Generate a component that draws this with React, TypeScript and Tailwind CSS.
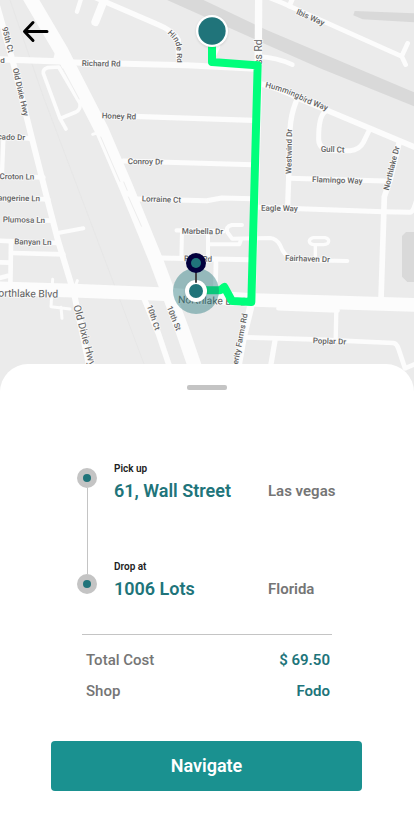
import React from "react";

type Road = { d: string; w: number };

const roads: Road[] = [
  // main avenues
  { d: "M88 -10 L185 155 L228 240 L305 390 L378 560 L470 785 L545 985 L588 1110", w: 42 },
  { d: "M-10 865 L220 872 L480 882 L760 900 L1000 907 L1250 915", w: 41 },
  { d: "M-8 20 L40 190 L92 400 L140 590 L175 725 L222 880 L270 1110", w: 18 },
  { d: "M776 -10 L774 300 L756 905 L730 1010 L712 1110", w: 22 },
  { d: "M430 890 L475 1000 L512 1110", w: 17 },
  // streets west of the highway
  { d: "M-5 178 L180 184", w: 19 },
  { d: "M172 182 Q168 165 180 160", w: 20 },
  { d: "M60 413 L95 416", w: 14 },
  { d: "M10 420 L6 520", w: 13 },
  { d: "M90 531 L130 532", w: 14 },
  { d: "M110 597 L145 598", w: 14 },
  { d: "M120 661 L160 662", w: 14 },
  { d: "M178 698 L250 685", w: 12 },
  { d: "M-5 722 L45 724 M150 728 L175 729", w: 14 },
  { d: "M33 730 L31 860", w: 14 },
  { d: "M38 759 L190 763", w: 14 },
  { d: "M-5 787 L32 788", w: 14 },
  { d: "M-5 835 L22 828", w: 14 },
  { d: "M158 838 L153 920 L210 927 M183 922 L186 955 M220 875 L232 842", w: 9 },
  // loop beside the highway
  { d: "M198 387 L180 355 L130 220 Q128 208 142 203 L176 201 L240 310 Q243 328 228 336 L184 354", w: 11 },
  { d: "M278 403 L300 396", w: 9 },
  // north side
  { d: "M245 -25 L470 72 Q520 92 535 120 L536 190", w: 16 },
  { d: "M245 -10 L231 35", w: 13 },
  { d: "M312 0 L286 66", w: 24 },
  { d: "M190 187 L560 196 L770 206", w: 18 },
  { d: "M636 180 L655 140", w: 12 },
  { d: "M400 349 L760 361", w: 16 },
  { d: "M370 483 L760 494", w: 15 },
  { d: "M410 597 L620 602 L665 594 L760 596", w: 15 },
  // centre block
  { d: "M530 691 L670 694", w: 13 },
  { d: "M726 675 L695 675 Q675 680 683 698 L696 716 L810 714 Q830 716 840 735 Q855 775 885 780 L1042 783", w: 12 },
  { d: "M546 695 L544 775 M624 695 L624 775 M624 733 L718 733 L722 722", w: 12 },
  { d: "M480 774 L752 779", w: 15 },
  { d: "M648 780 L646 890", w: 14 },
  // east side
  { d: "M775 -20 L850 10 L1205 169 L1223 130 M1205 169 L1217 194", w: 14 },
  { d: "M880 -10 L868 18", w: 15 },
  { d: "M775 170 Q830 172 877 194", w: 14 },
  { d: "M775 250 Q840 265 900 297 L1110 385 L1250 444", w: 17 },
  { d: "M888 305 Q872 345 870 390 L866 535 L863 620", w: 16 },
  { d: "M975 335 Q955 350 956 420 Q958 451 1000 452 L1050 452 Q1078 450 1090 427 L1108 390", w: 15 },
  { d: "M1198 425 L1170 540 L1153 590 L1143 900", w: 17 },
  { d: "M868 535 L1155 543", w: 15 },
  { d: "M775 622 L1150 635 L1230 637 Q1240 636 1250 600", w: 15 },
  { d: "M940 713 L975 713 Q986 715 986 723 Q986 733 970 734 L942 734 Q928 732 928 723 Q929 715 940 713 M946 736 L946 770", w: 10 },
  { d: "M835 925 L1013 932", w: 13 },
  { d: "M1009 930 L1007 1020", w: 13 },
  { d: "M738 1012 L940 1018 L1180 1029 Q1190 1030 1195 1045 L1215 1105 L1250 1090", w: 14 },
  { d: "M825 1022 L810 1110", w: 16 },
];

type Label = { t: string; x: number; y: number; r?: number; big?: boolean; end?: boolean };

const labels: Label[] = [
  { t: "95th Ct", x: 6, y: 83, r: 76 },
  { t: "d", x: 1, y: 188 },
  { t: "Old Dixie Hwy", x: 38, y: 206, r: 77 },
  { t: "Richard Rd", x: 245, y: 198, r: 1 },
  { t: "Honey Rd", x: 305, y: 355, r: 2 },
  { t: "Conroy Dr", x: 383, y: 492, r: 1 },
  { t: "Lorraine Ct", x: 425, y: 604, r: 2 },
  { t: "Marbella Dr", x: 545, y: 701, r: 1 },
  { t: "Ruth Rd", x: 552, y: 784, r: 1 },
  { t: "cado Dr", x: 75, y: 421, r: 2, end: true },
  { t: "Croton Ln", x: 103, y: 539, r: 1, end: true },
  { t: "angerine Ln", x: 120, y: 604, r: 1, end: true },
  { t: "Plumosa Ln", x: 135, y: 669, r: 1, end: true },
  { t: "Banyan Ln", x: 154, y: 735, r: 1, end: true },
  { t: "orthlake Blvd", x: 174, y: 893, r: 1, big: true, end: true },
  { t: "Old Dixie Hwy", x: 220, y: 918, r: 75, big: true },
  { t: "10th Ct", x: 440, y: 918, r: 71 },
  { t: "10th St", x: 500, y: 922, r: 68 },
  { t: "Northlake Blvd", x: 534, y: 909, r: 2, big: true },
  { t: "ss Rd", x: 785, y: 118, r: -90, big: true, end: true },
  { t: "Prosperity Farms Rd", x: 743, y: 942, r: -79, end: true },
  { t: "Ibis Way", x: 887, y: 41, r: 24 },
  { t: "Westwind Dr", x: 874, y: 522, r: -89 },
  { t: "Gull Ct", x: 962, y: 455, r: 2 },
  { t: "Flamingo Way", x: 936, y: 546, r: 2 },
  { t: "Northlake Dr", x: 1166, y: 572, r: -76 },
  { t: "Eagle Way", x: 783, y: 632, r: 1 },
  { t: "Fairhaven Dr", x: 855, y: 782, r: 2 },
  { t: "Poplar Dr", x: 938, y: 1030, r: 2 },
];

function StreetMap() {
  return (
    <svg
      viewBox="0 0 1242 1230"
      preserveAspectRatio="xMidYMin slice"
      className="block h-[410px] w-full bg-[#ebebeb]"
      role="img"
      aria-label="Route map"
    >
      <path d="M490 -5 L600 -5 L800 90 L1250 280 L1250 322 L960 205 L780 125 Z" fill="#d9d9d9" />
      <path d="M1064 33 L1250 40 L1250 67 L1088 58 L1060 46 Z" fill="#d9d9d9" />
      <path d="M1218 696 H1250 V846 H1222 L1206 830 V708 Z" fill="#d9d9d9" />
      <path d="M30 0 L130 290 L345 860 L435 1100" stroke="#e4e4e4" strokeWidth="2" fill="none" />
      <g fill="none" stroke="#fcfcfc" strokeLinecap="round" strokeLinejoin="round">
        {roads.map((road) => (
          <path key={road.d} d={road.d} strokeWidth={road.w} />
        ))}
      </g>
      <path d="M188 205 L238 298 M371 545 L382 572 M302 410 L360 545 M385 590 L425 680" stroke="#ededed" strokeWidth="3" fill="none" />
      <g
        className="font-['Roboto',sans-serif] font-medium"
        fill="#616161"
        stroke="#fafafa"
        strokeWidth="5"
        strokeLinejoin="round"
        paintOrder="stroke"
      >
        {labels.map((l) => (
          <text
            key={l.t + l.x}
            transform={`translate(${l.x} ${l.y}) rotate(${l.r ?? 0})`}
            fontSize={l.big ? 31 : 24}
            fontWeight={l.big ? 400 : 500}
            textAnchor={l.end ? "end" : "start"}
          >
            {l.t}
          </text>
        ))}
        <path id="hinde" d="M502 100 L518 116 Q529 128 530 150 L530 220" fill="none" stroke="none" />
        <path id="hummingbird" d="M795 262 Q860 276 915 307 L1010 344" fill="none" stroke="none" />
        <text fontSize="24">
          <textPath href="#hinde">Hinde Rd</textPath>
        </text>
        <text fontSize="24">
          <textPath href="#hummingbird">Hummingbird Way</textPath>
        </text>
      </g>
      <path
        d="M636 110 V186 L773 196 L754 906 L696 903 L673 861 L660 871 H590"
        fill="none"
        stroke="#00ff7b"
        strokeWidth="24"
        strokeLinejoin="round"
      />
      <g className="drop-shadow-md">
        <circle cx="636" cy="93" r="48" fill="#fff" />
      </g>
      <circle cx="636" cy="93" r="41" fill="#20747a" />
      <circle cx="588" cy="873" r="69" fill="#20747a" fillOpacity="0.42" />
      <g className="drop-shadow-md">
        <circle cx="588" cy="873" r="33" fill="#fff" />
      </g>
      <circle cx="588" cy="873" r="21" fill="#20747a" />
      <path d="M588 808 V848" stroke="#444" strokeWidth="6" />
      <circle cx="588" cy="789" r="30" fill="#03003d" />
      <circle cx="588" cy="789" r="15" fill="#20747a" />
    </svg>
  );
}

function Dot() {
  return (
    <span className="flex size-5 items-center justify-center rounded-full bg-[#c4c4c4]">
      <span className="size-2 rounded-full bg-[#20747a]" />
    </span>
  );
}

function Stop({ label, street, city }: { label: string; street: string; city: string }) {
  return (
    <li className="grid grid-cols-[154px_1fr] items-center gap-y-1">
      <span className="col-span-2 text-[10px] leading-3 font-semibold text-[#222]">{label}</span>
      <span className="text-lg leading-6 font-semibold text-[#20747a]">{street}</span>
      <span className="text-[15px] leading-6 font-semibold whitespace-nowrap text-[#757575]">{city}</span>
    </li>
  );
}

function SummaryRow({ name, value }: { name: string; value: string }) {
  return (
    <div className="flex justify-between text-[15px] leading-6">
      <dt className="font-medium text-[#757575]">{name}</dt>
      <dd className="font-semibold text-[#20747a]">{value}</dd>
    </div>
  );
}

export default function App() {
  return (
    <main className="flex min-h-screen flex-col bg-white font-['Roboto',sans-serif]">
      <div className="relative">
        <StreetMap />
        <button type="button" aria-label="Back" className="absolute top-4 left-5 size-8">
          <svg viewBox="0 0 32 32" className="size-8" fill="none" stroke="#000" strokeWidth="3" strokeLinecap="round" strokeLinejoin="round">
            <path d="M27 15.5H5M13 6.5L4.500 15.500L13 24.500" />
          </svg>
        </button>
      </div>

      <section className="relative -mt-[46px] flex grow flex-col rounded-t-[28px] bg-white pt-[21px] pb-8">
        <div className="mx-auto h-[5px] w-10 rounded-xs bg-[#c4c4c4]" />

        <div className="mx-auto mt-[73px] flex w-[260px] gap-[17px]">
          <div className="flex flex-col items-center pt-[5px] pb-[7px]" aria-hidden="true">
            <Dot />
            <span className="w-px grow bg-[#c4c4c4]" />
            <Dot />
          </div>
          <ol className="flex grow flex-col gap-[58px]">
            <Stop label="Pick up" street="61, Wall Street" city="Las vegas" />
            <Stop label="Drop at" street="1006 Lots" city="Florida" />
          </ol>
        </div>

        <dl className="mx-auto mt-[33px] flex w-[250px] flex-col gap-[7px] border-t border-[#c4c4c4] pt-[13px] pr-[2px] pl-1">
          <SummaryRow name="Total Cost" value="$ 69.50" />
          <SummaryRow name="Shop" value="Fodo" />
        </dl>

        <button
          type="button"
          className="mr-[52px] ml-[51px] mt-[38px] h-[50px] rounded-sm bg-[#1a9190] text-lg leading-6 font-semibold text-white"
        >
          Navigate
        </button>
      </section>
    </main>
  );
}
